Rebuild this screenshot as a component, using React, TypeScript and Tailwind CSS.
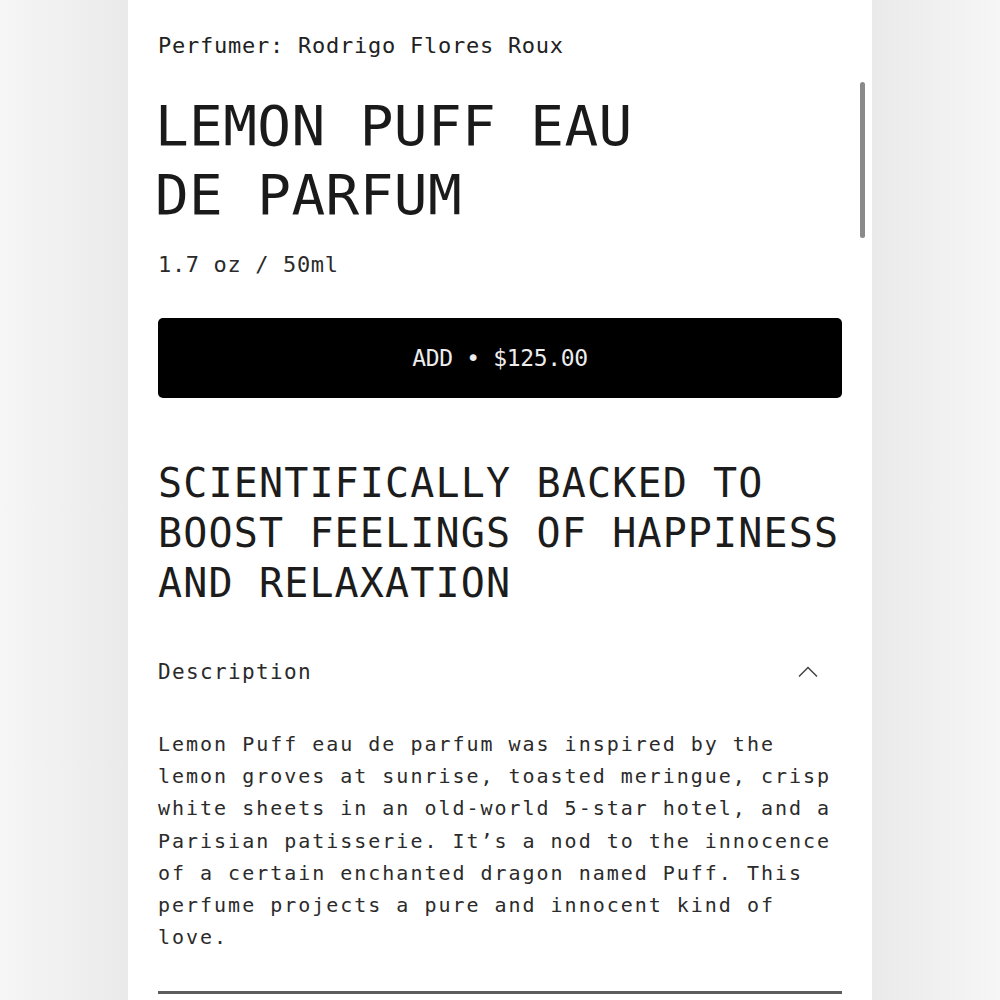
import React from 'react';

const mono = "font-['DejaVu_Sans_Mono',monospace]";

const App: React.FC = () => {
  return (
    <div className={`flex w-full h-[1000px] overflow-hidden bg-[#f0f0f0] ${mono}`}>
      <div className="w-[128px] shrink-0 bg-gradient-to-r from-[#f6f6f6] to-[#eaeaea]" />

      <div className="relative flex-1 bg-white px-[30px] pt-[30px] overflow-hidden">
        {/* overlay scrollbar */}
        <div className="absolute right-[7px] top-[82px] w-[5px] h-[156px] rounded-full bg-[#8a8a8a]" />

        <p className="text-[22px] leading-[32px] tracking-[0.75px] text-[#222]">
          Perfumer: Rodrigo Flores Roux
        </p>

        <h1 className="mt-[29px] -ml-[3px] w-[520px] text-[56px] leading-[69px] tracking-[0.4px] text-[#1a1a1a]">
          LEMON PUFF EAU DE PARFUM
        </h1>

        <p className="mt-[20px] text-[22px] leading-[32px] tracking-[0.65px] text-[#2a2a2a]">
          1.7 oz / 50ml
        </p>

        <button
          type="button"
          className="mt-[37px] w-full h-[80px] rounded-[5px] bg-black text-[#ececec] text-[23px] tracking-[-0.35px] flex items-center justify-center"
        >
          ADD • $125.00
        </button>

        <h2 className="mt-[60px] text-[40px] leading-[50px] tracking-[1.15px] text-[#1c1c1c]">
          SCIENTIFICALLY BACKED TO BOOST FEELINGS OF HAPPINESS AND RELAXATION
        </h2>

        <div className="mt-[48px] flex items-center justify-between">
          <span className="text-[21px] leading-[32px] tracking-[1.35px] text-[#2a2a2a]">Description</span>
          <svg width="20" height="12" viewBox="0 0 20 12" className="mr-[24px]">
            <polyline points="1,10.5 10,1.5 19,10.5" fill="none" stroke="#444" strokeWidth="1.5" />
          </svg>
        </div>

        <p className="mt-[40px] text-[20px] leading-[32.2px] tracking-[1.98px] text-[#2b2b2b]">
          Lemon Puff eau de parfum was inspired by the lemon groves at sunrise, toasted meringue, crisp white sheets in an old-world 5-star hotel, and a Parisian patisserie. It’s a nod to the innocence of a certain enchanted dragon named Puff. This perfume projects a pure and innocent kind of love.
        </p>

        <div className="mt-[38px] h-[3px] bg-[#5c5c5c]" />
      </div>

      <div className="w-[128px] shrink-0 bg-gradient-to-l from-[#f6f6f6] to-[#eaeaea]" />
    </div>
  );
};

export default App;
